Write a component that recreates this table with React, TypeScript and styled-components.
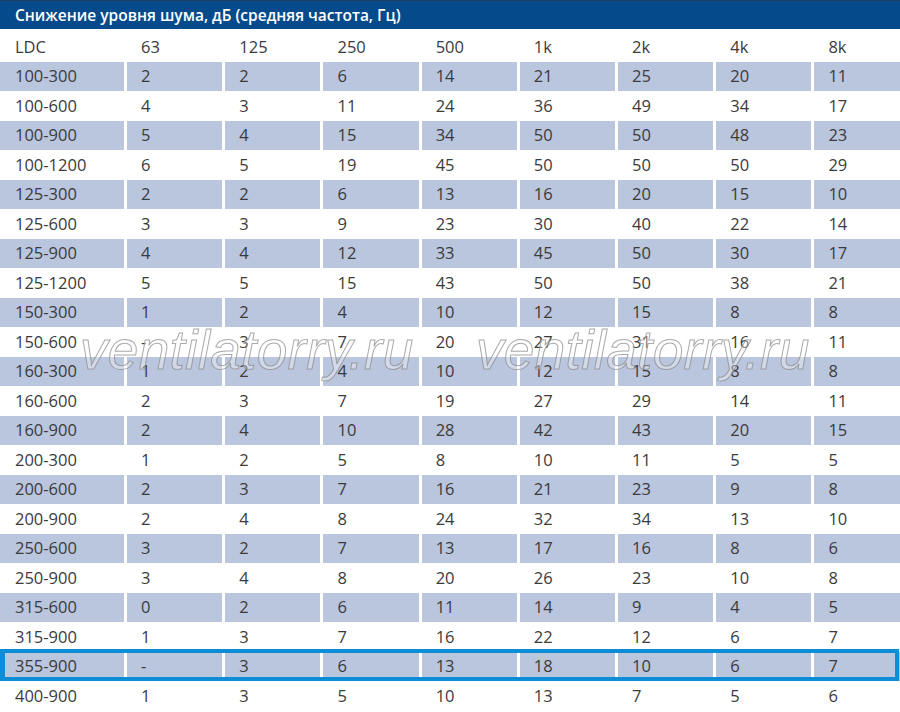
import React from "react";
import styled, { createGlobalStyle } from "styled-components";

const Global = createGlobalStyle`
  html, body { margin: 0; padding: 0; background: #ffffff; }
  body { width: 900px; height: 712px; overflow: hidden; }
`;

const Page = styled.div`
  position: relative;
  width: 900px;
  font-family: "Open Sans", "Liberation Sans", sans-serif;
  color: #3b3b3b;
`;

const TitleBar = styled.div`
  height: 29.3px;
  box-sizing: border-box;
  background: #054b8b;
  border-top: 1px solid #1c3c66;
  display: flex;
  align-items: center;
  padding-left: 15px;
  color: #ffffff;
  font-size: 15.5px;
  font-weight: 600;
  letter-spacing: 0;
`;

const Row = styled.div<{ $head?: boolean; $active?: boolean }>`
  position: relative;
  display: grid;
  grid-template-columns: 124px repeat(7, 95.1px) 1fr;
  column-gap: 3.1px;
  height: ${(p) => (p.$head ? "32.4px" : "29.5px")};
  box-sizing: border-box;
  padding-top: ${(p) => (p.$head ? "3px" : "0")};
  ${(p) =>
    p.$active &&
    `
    &::after {
      content: "";
      position: absolute;
      top: -3px;
      bottom: 0;
      left: 0;
      right: 1px;
      border: 4px solid #0c8dd6;
      border-left-width: 5px;
      pointer-events: none;
      z-index: 2;
    }
  `}
`;

const Cell = styled.div<{ $shaded?: boolean; $first?: boolean }>`
  display: flex;
  align-items: center;
  padding-left: ${(p) => (p.$first ? "15px" : "14px")};
  background: ${(p) => (p.$shaded ? "#bac5de" : "transparent")};
  font-size: 16.5px;
  line-height: 1;
  white-space: nowrap;
`;

const Body = styled.div`
  position: relative;
`;

const Watermark = styled.div<{ $left: number }>`
  position: absolute;
  top: 261px;
  left: ${(p) => p.$left}px;
  font-family: "Liberation Sans", Arial, sans-serif;
  font-style: italic;
  font-size: 55px;
  letter-spacing: 0.3px;
  line-height: 1;
  color: rgba(255, 255, 255, 0.35);
  -webkit-text-stroke: 1px rgba(140, 140, 140, 0.75);
  pointer-events: none;
  white-space: nowrap;
`;

const header = ["LDC", "63", "125", "250", "500", "1k", "2k", "4k", "8k"];

const data: string[][] = [
  ["100-300", "2", "2", "6", "14", "21", "25", "20", "11"],
  ["100-600", "4", "3", "11", "24", "36", "49", "34", "17"],
  ["100-900", "5", "4", "15", "34", "50", "50", "48", "23"],
  ["100-1200", "6", "5", "19", "45", "50", "50", "50", "29"],
  ["125-300", "2", "2", "6", "13", "16", "20", "15", "10"],
  ["125-600", "3", "3", "9", "23", "30", "40", "22", "14"],
  ["125-900", "4", "4", "12", "33", "45", "50", "30", "17"],
  ["125-1200", "5", "5", "15", "43", "50", "50", "38", "21"],
  ["150-300", "1", "2", "4", "10", "12", "15", "8", "8"],
  ["150-600", "-", "3", "7", "20", "27", "31", "16", "11"],
  ["160-300", "1", "2", "4", "10", "12", "15", "8", "8"],
  ["160-600", "2", "3", "7", "19", "27", "29", "14", "11"],
  ["160-900", "2", "4", "10", "28", "42", "43", "20", "15"],
  ["200-300", "1", "2", "5", "8", "10", "11", "5", "5"],
  ["200-600", "2", "3", "7", "16", "21", "23", "9", "8"],
  ["200-900", "2", "4", "8", "24", "32", "34", "13", "10"],
  ["250-600", "3", "2", "7", "13", "17", "16", "8", "6"],
  ["250-900", "3", "4", "8", "20", "26", "23", "10", "8"],
  ["315-600", "0", "2", "6", "11", "14", "9", "4", "5"],
  ["315-900", "1", "3", "7", "16", "22", "12", "6", "7"],
  ["355-900", "-", "3", "6", "13", "18", "10", "6", "7"],
  ["400-900", "1", "3", "5", "10", "13", "7", "5", "6"],
];

export default function App() {
  return (
    <Page>
      <Global />
      <TitleBar>Снижение уровня шума, дБ (средняя частота, Гц)</TitleBar>
      <Row $head>
        {header.map((h, i) => (
          <Cell key={i} $first={i === 0}>
            {h}
          </Cell>
        ))}
      </Row>
      <Body>
        {data.map((r, ri) => {
          const shaded = ri % 2 === 0;
          return (
            <Row key={ri} $active={r[0] === "355-900"}>
              {r.map((v, ci) => (
                <Cell key={ci} $shaded={shaded} $first={ci === 0}>
                  {v}
                </Cell>
              ))}
            </Row>
          );
        })}
        <Watermark $left={80}>ventilatorry.ru</Watermark>
        <Watermark $left={476}>ventilatorry.ru</Watermark>
      </Body>
    </Page>
  );
}
